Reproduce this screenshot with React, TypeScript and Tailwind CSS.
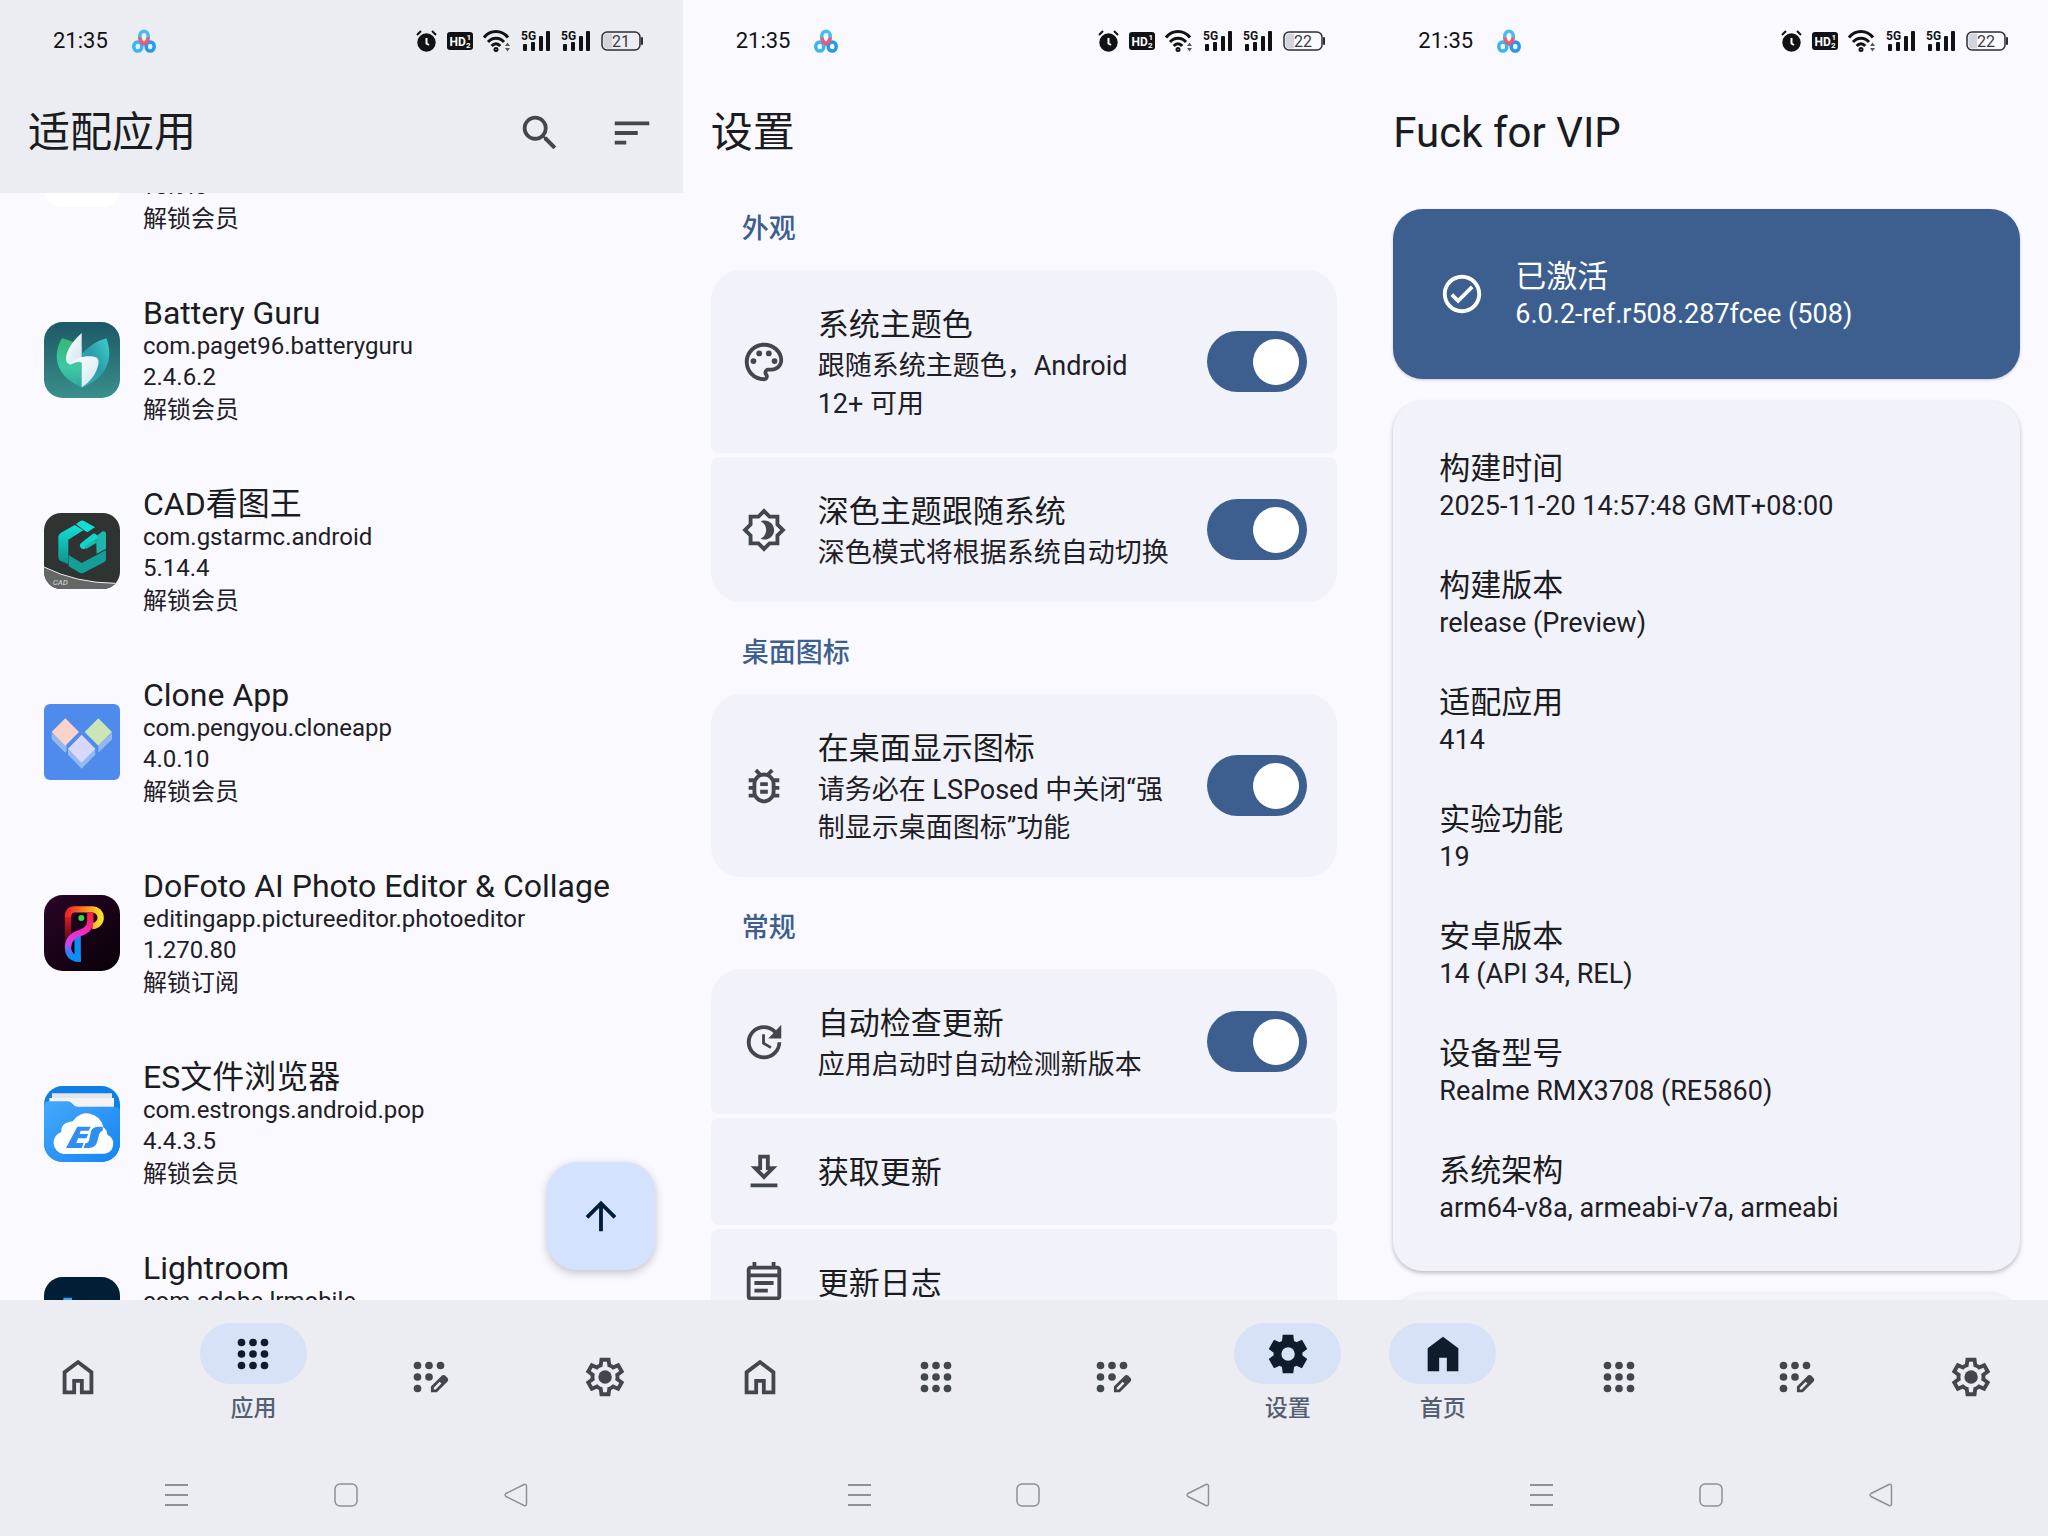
import type { ReactNode } from 'react';
import { useId } from 'react';
import { clsx } from 'clsx';

type Tab = 'home' | 'apps' | 'custom' | 'settings';

function Icon({ children, viewBox = '0 0 24 24', className }: { children: ReactNode; viewBox?: string; className?: string }) {
  return (
    <svg viewBox={viewBox} fill="currentColor" aria-hidden="true" className={clsx('size-[46px] shrink-0', className)}>
      {children}
    </svg>
  );
}

/* ---------- status bar ---------- */

function SignalIcon() {
  return (
    <svg viewBox="0 0 30 22" className="h-[22px] w-[30px]" fill="#111214" aria-hidden="true">
      <text x="0" y="10" fontSize="12" fontWeight="700" fontFamily="Roboto, sans-serif">5G</text>
      <rect x="2" y="14" width="4" height="7" rx="1" />
      <rect x="10" y="12" width="4" height="9" rx="1" />
      <rect x="18" y="6" width="4" height="15" rx="1" />
      <rect x="25" y="1" width="4" height="20" rx="1" />
    </svg>
  );
}

function StatusBar({ battery }: { battery: number }) {
  return (
    <div className="flex h-[72px] shrink-0 items-center justify-between pt-[10px] pr-[40px] pl-[53px] text-[#111214]">
      <div className="flex items-center gap-6">
        <span className="text-[22px] leading-8">21:35</span>
        <svg viewBox="0 0 24 24" className="size-6" fill="none" strokeWidth="3.500" aria-hidden="true">
          <ellipse cx="5.800" cy="17.500" rx="4" ry="4.600" stroke="#35b6f2" />
          <ellipse cx="18.200" cy="17.500" rx="4" ry="4.600" stroke="#1f9bea" />
          <path d="M7.800 10V7a4.200 4.800 0 0 1 8.400 0v3" stroke="#45bdf0" />
          <path d="M7.800 8.500c0 3.500 2 5 4.200 6.500 2.200-1.500 4.200-3 4.200-6.500" stroke="#ee5a75" />
        </svg>
      </div>
      <div className="flex items-center gap-[10px]">
        <svg viewBox="0 0 21 22" className="h-[22px] w-[21px]" fill="#111214" aria-hidden="true">
          <circle cx="10.500" cy="12.500" r="9.200" />
          <path d="M1 5l4-4M20 5l-4-4" stroke="#111214" strokeWidth="2" />
          <path d="M10.500 8v5.500l2.500 1.500" stroke="#fff" strokeWidth="2" fill="none" />
        </svg>
        <svg viewBox="0 0 26 18" className="h-[18px] w-[26px]" aria-hidden="true">
          <rect width="26" height="18" rx="3" fill="#111214" />
          <g fill="#fff" fontFamily="Roboto, sans-serif" fontWeight="700">
            <text x="2.500" y="13.500" fontSize="12">HD</text>
            <text x="19.500" y="8" fontSize="8">1</text>
            <text x="19" y="16" fontSize="8">2</text>
          </g>
        </svg>
        <svg viewBox="0 0 28 22" className="h-[22px] w-[28px]" fill="none" stroke="#111214" strokeWidth="3" aria-hidden="true">
          <path d="M1 7.500C7.500-.500 18.500-.500 25 7.500M5 12c4.500-5 11.500-5 16 0M8.700 16c2.500-3 6-3 8.500 0" />
          <circle cx="13" cy="19.500" r="1" />
          <path d="M22 16l2.500-3.500L27 16zM22 18l2.500 3.500L27 18z" fill="#55585c" stroke="none" />
        </svg>
        <SignalIcon />
        <SignalIcon />
        <svg viewBox="0 0 42 20" className="h-5 w-[42px]" aria-hidden="true">
          <rect x="1" y="1" width="38" height="18" rx="5" fill="none" stroke="#2c2d31" strokeWidth="1.500" />
          <path d="M6 2.500h5v15H6a3.500 3.500 0 0 1-3.500-3.500V6A3.500 3.500 0 0 1 6 2.500z" fill="#d3d4d9" />
          <rect x="40" y="6" width="2" height="8" rx="1" fill="#2c2d31" />
          <text x="20" y="16" textAnchor="middle" fontSize="16" fill="#3a3b3f" fontFamily="Roboto, sans-serif">{battery}</text>
        </svg>
      </div>
    </div>
  );
}

/* ---------- bottom navigation ---------- */

const GEAR =
  'm370-80-16-128q-13-5-24.5-12T307-235l-119 50L78-375l103-78q-1-7-1-13.5v-27q0-6.5 1-13.5L78-585l110-190 119 50q11-8 23-15t24-12l16-128h220l16 128q13 5 24.5 12t22.5 15l119-50 110 190-103 78q1 7 1 13.5v27q0 6.5-2 13.5l103 78-110 190-118-50q-11 8-23 15t-24 12L590-80H370Z';

function DotGrid({ points }: { points: [number, number][] }) {
  return (
    <>
      {points.map(([x, y]) => (
        <circle key={`${x}${y}`} cx={x} cy={y} r="80" />
      ))}
    </>
  );
}

const CUSTOM_DOTS: [number, number][] = [[240, -720], [480, -720], [720, -720], [240, -480], [480, -480], [240, -240]];
const APP_DOTS: [number, number][] = [...CUSTOM_DOTS, [720, -480], [480, -240], [720, -240]];

function NavIcon({ tab, active }: { tab: Tab; active: boolean }) {
  return (
    <Icon viewBox="0 -960 960 960">
      {tab === 'home' && (
        <path
          d={
            active
              ? 'M160-120v-480l320-240 320 240v480H560v-280H400v280H160Z'
              : 'M240-200h120v-240h240v240h120v-360L480-740 240-560v360Zm-80 80v-480l320-240 320 240v480H520v-240h-80v240H160Z'
          }
        />
      )}
      {tab === 'apps' && <DotGrid points={APP_DOTS} />}
      {tab === 'custom' && (
        <>
          <DotGrid points={CUSTOM_DOTS} />
          <path d="M520-160v-123l221-220q9-9 20-13t22-4q12 0 23 4.5t20 13.5l37 37q8 9 12.5 20t4.5 22q0 11-4 22.5T863-380L643-160H520Zm60-60h38l121-122-37-37-122 121v38Z" fillRule="evenodd" />
        </>
      )}
      {tab === 'settings' &&
        (active ? (
          <path fillRule="evenodd" d={`${GEAR}M482-340q58 0 99-41t41-99q0-58-41-99t-99-41q-59 0-99.5 41T342-480q0 58 40.500 99t99.500 41Z`} />
        ) : (
          <>
            <path
              fillRule="evenodd"
              d={`${GEAR}M440-160h79l14-106q31-8 57.500-23.500T639-327l99 41 39-68-86-65q5-14 7-29.500t2-31.500q0-16-2-31.500t-7-29.500l86-65-39-68-99 42q-22-23-48.500-38.500T533-694l-13-106h-79l-14 106q-31 8-57.500 23.500T321-633l-99-41-39 68 86 64q-5 15-7 30t-2 32q0 16 2 31t7 30l-86 65 39 68 99-42q22 23 48.500 38.500T427-266l13 106Z`}
            />
            <circle cx="482" cy="-480" r="140" />
          </>
        ))}
    </Icon>
  );
}

const TABS: { id: Tab; label: string }[] = [
  { id: 'home', label: '首页' },
  { id: 'apps', label: '应用' },
  { id: 'custom', label: '自定义' },
  { id: 'settings', label: '设置' },
];

function BottomBar({ current }: { current: Tab }) {
  return (
    <footer className="shrink-0 bg-[#ecedf2]">
      <nav className="flex h-[154px] items-center justify-between px-6">
        {TABS.map(({ id, label }) => {
          const active = id === current;
          return (
            <button key={id} type="button" aria-label={label} className="flex w-[107px] flex-col items-center text-[#42474e]">
              <span className={clsx('flex h-[61px] w-full items-center justify-center rounded-full', active && 'bg-[#d7e2f6] text-[#0e1c2b]')}>
                <NavIcon tab={id} active={active} />
              </span>
              {active && <span className="mt-[3px] text-[23px] leading-[44px] font-medium text-[#545f71]">{label}</span>}
            </button>
          );
        })}
      </nav>
      <div className="flex h-[82px] items-center justify-between pr-[155px] pl-[165px] text-[#8f9095]">
        <button type="button" aria-label="Recents">
          <svg viewBox="0 0 23 24" className="h-6 w-[23px]" stroke="currentColor" strokeWidth="2"><path d="M0 2h23M0 12h23M0 22h23" /></svg>
        </button>
        <button type="button" aria-label="Home">
          <svg viewBox="0 0 24 24" className="size-6" fill="none" stroke="currentColor" strokeWidth="1.500"><rect x="1" y="1" width="22" height="22" rx="5" /></svg>
        </button>
        <button type="button" aria-label="Back">
          <svg viewBox="0 0 24 24" className="size-6" fill="none" stroke="currentColor" strokeWidth="1.500"><path d="M20 1.500 2 10.500q-2 1.500 0 3L20 22.500q2.500.700 2.500-1.500V3q0-2.200-2.500-1.500z" /></svg>
        </button>
      </div>
    </footer>
  );
}

function Screen({ title, battery, tab, tinted, actions, children }: { title: string; battery: number; tab: Tab; tinted?: boolean; actions?: ReactNode; children: ReactNode }) {
  return (
    <section className="flex min-w-0 flex-col overflow-hidden bg-[#faf9ff]">
      <header className={clsx('shrink-0', tinted && 'bg-[#ecedf2]')}>
        <StatusBar battery={battery} />
        <div className="flex h-[121px] items-center justify-between px-7">
          <h1 className="text-[42px] leading-[60px] text-[#1a1c20]">{title}</h1>
          {actions}
        </div>
      </header>
      <main className="relative min-h-0 flex-1 overflow-hidden">{children}</main>
      <BottomBar current={tab} />
    </section>
  );
}

/* ---------- app list ---------- */

function BatteryGuruLogo() {
  return (
    <svg viewBox="0 0 228 228" aria-hidden="true">
      <defs>
        <linearGradient id="bg-base" x1="0" y1="0" x2="0" y2="1"><stop stopColor="#1c5866" /><stop offset="1" stopColor="#3a8f8b" /></linearGradient>
        <linearGradient id="bg-left" x1="0" y1="0" x2="0" y2="1"><stop stopColor="#35b873" /><stop offset=".6" stopColor="#3cc9a4" /><stop offset="1" stopColor="#2fa79e" /></linearGradient>
        <linearGradient id="bg-right" x1="1" y1="0" x2="0" y2="1"><stop stopColor="#3bd0c6" /><stop offset=".5" stopColor="#2c9bab" /><stop offset="1" stopColor="#35b8b8" /></linearGradient>
        <linearGradient id="bg-white" x1="0" y1="0" x2="1" y2="1"><stop stopColor="#ffffff" /><stop offset="1" stopColor="#cfe6f2" /></linearGradient>
      </defs>
      <rect width="228" height="228" rx="56" fill="url(#bg-base)" />
      <path d="M54 49C30 88 22 156 113 197V75Q80 54 54 49z" fill="url(#bg-left)" />
      <path d="M187 49C202 88 208 160 113 197V96Q146 60 187 49z" fill="url(#bg-right)" />
      <path d="M113 33C88 56 66 84 66 112q0 13 13 16 10-12 34-14z" fill="url(#bg-white)" />
      <path d="M79 128c14-20 38-26 62-25 20 1 25 8 22 24-5 27-23 51-50 69v-74q-14-6-34 6z" fill="url(#bg-white)" />
    </svg>
  );
}

function CadLogo() {
  return (
    <svg viewBox="0 0 228 228" aria-hidden="true">
      <defs>
        <clipPath id="cad-clip"><rect width="228" height="228" rx="52" /></clipPath>
        <linearGradient id="cad-teal" x1="0" y1="0" x2="0" y2="1"><stop stopColor="#0fe3d6" /><stop offset="1" stopColor="#128f8b" /></linearGradient>
      </defs>
      <g clipPath="url(#cad-clip)">
        <rect width="228" height="228" fill="#2f3332" />
        <path d="M0 162Q96 212 228 210V228H0z" fill="#636766" />
        <path d="M0 162Q96 210 214 211" fill="none" stroke="#f2f3f3" strokeWidth="3" />
      </g>
      <path d="M92 36 118 52 73 80V154L50 144Q43 141 43 132V72Q43 64 50 60z" fill="url(#cad-teal)" />
      <path d="M96 33 108 25q6-4 12-1l33 19-22 14q-6-1-9-4z" fill="#10dfd3" />
      <path d="M74 126 113 150 186 111V140Q186 144 180 148L119 179Q113 182 107 179L74 160z" fill="#159d98" />
      <path d="M156 70 176 55q10-2 10 8v44l-28 15z" fill="#1db7b0" />
      <path d="M118 98 150 72" stroke="#11d5ca" strokeWidth="20" strokeLinecap="round" />
      <path d="M124 104 156 84" stroke="#18b9b1" strokeWidth="10" />
      <text x="26" y="216" fontSize="24" fontStyle="italic" fontWeight="500" fill="#c3c6c5" fontFamily="Roboto, sans-serif">CAD</text>
    </svg>
  );
}

function CloneAppLogo() {
  return (
    <svg viewBox="0 0 228 228" aria-hidden="true">
      <rect width="228" height="228" rx="18" fill="#4f8bec" />
      <path d="M23 86v20l41 40 4-4v-18zM204 86v20l-41 40v-20z" fill="#94b8f2" />
      <path d="M64 43 105 84 64 125 23 84z" fill="#fcd3ca" />
      <path d="M163 43 204 84 163 125 122 84z" fill="#cbe6b4" />
      <path d="M72 134v18l41 42 41-42v-18z" fill="#94b8f2" />
      <path d="M113 92 154 134 113 176 72 134z" fill="#dad7fd" />
    </svg>
  );
}

function DoFotoLogo() {
  return (
    <svg viewBox="0 0 228 228" fill="none" strokeWidth="19" aria-hidden="true">
      <defs>
        <linearGradient id="df-base" x1="0" y1="0" x2="1" y2="1"><stop stopColor="#2a0428" /><stop offset="1" stopColor="#080107" /></linearGradient>
        <linearGradient id="df-top" gradientUnits="userSpaceOnUse" x1="70" y1="0" x2="178" y2="0"><stop stopColor="#f5222d" /><stop offset=".5" stopColor="#f98a1f" /><stop offset="1" stopColor="#f6ea27" /></linearGradient>
        <linearGradient id="df-left" gradientUnits="userSpaceOnUse" x1="0" y1="50" x2="0" y2="140"><stop stopColor="#f5222d" /><stop offset="1" stopColor="#4d0715" /></linearGradient>
        <linearGradient id="df-mid" gradientUnits="userSpaceOnUse" x1="139" y1="50" x2="80" y2="160"><stop stopColor="#f5222d" /><stop offset=".55" stopColor="#f22dd0" /><stop offset="1" stopColor="#c14be8" /></linearGradient>
        <linearGradient id="df-low" gradientUnits="userSpaceOnUse" x1="0" y1="140" x2="0" y2="185"><stop stopColor="#c14be8" /><stop offset="1" stopColor="#0b8ff5" /></linearGradient>
      </defs>
      <rect width="228" height="228" rx="56" fill="url(#df-base)" />
      <path d="M72 142V64" stroke="url(#df-left)" />
      <path d="M101 122V200" stroke="#0b8ff5" />
      <path d="M72 66Q72 43 92 43H145a25 25 0 0 1 0 50" stroke="url(#df-top)" />
      <path d="M139 52V78Q139 104 108 114 72 126 72 156" stroke="url(#df-mid)" />
      <path d="M72 152v8q2 31 38 31" stroke="url(#df-low)" />
      <circle cx="112" cy="69" r="9" fill="#2fdf3a" />
    </svg>
  );
}

function EsLogo() {
  return (
    <svg viewBox="0 0 228 228" aria-hidden="true">
      <defs>
        <clipPath id="es-clip"><rect width="228" height="228" rx="56" /></clipPath>
        <linearGradient id="es-front" x1="0" y1="0" x2="1" y2="1"><stop stopColor="#45a9fb" /><stop offset="1" stopColor="#1583f3" /></linearGradient>
      </defs>
      <g clipPath="url(#es-clip)">
        <rect width="228" height="228" fill="#0f7fe6" />
        <path d="M24 22H204V50H24z" fill="#e3e5e8" />
        <path d="M16 36H210V70H16z" fill="#f3f3f4" />
        <path d="M0 60q2-14 14-14H72q9 0 14 8 6 8 14 8H212q16 0 16 14V228H0z" fill="url(#es-front)" />
      </g>
      <path d="M58 204a34 34 0 0 1-6-66q-2-28 34-32a50 50 0 0 1 92 18q12 8 12 22a30 30 0 0 1-8 57z" fill="#fff" />
      <path d="M100 122h40l-6 12H110l-3 10h26l-6 13H102l-5 14h22l-6 15H66z" fill="#2f8ff0" />
      <path d="M176 122h-14q-20 0-22 20l-4 18q-2 12-12 12l-6 14h16q22 0 26-20l5-20q3-10 11-12z" fill="#2f8ff0" />
    </svg>
  );
}

function LightroomLogo() {
  return (
    <svg viewBox="0 0 228 228" aria-hidden="true">
      <rect width="228" height="228" rx="56" fill="#001e36" />
      <path d="M58 62h26v88h40v20H58z" fill="#31a8ff" />
    </svg>
  );
}

const APPS = [
  { name: '', pkg: '', version: 'v8.9.0', tag: '解锁会员', logo: <div className="size-full rounded-[18px] bg-white" /> },
  { name: 'Battery Guru', pkg: 'com.paget96.batteryguru', version: '2.4.6.2', tag: '解锁会员', logo: <BatteryGuruLogo /> },
  { name: 'CAD看图王', pkg: 'com.gstarmc.android', version: '5.14.4', tag: '解锁会员', logo: <CadLogo /> },
  { name: 'Clone App', pkg: 'com.pengyou.cloneapp', version: '4.0.10', tag: '解锁会员', logo: <CloneAppLogo /> },
  { name: 'DoFoto AI Photo Editor & Collage', pkg: 'editingapp.pictureeditor.photoeditor', version: '1.270.80', tag: '解锁订阅', logo: <DoFotoLogo /> },
  { name: 'ES文件浏览器', pkg: 'com.estrongs.android.pop', version: '4.4.3.5', tag: '解锁会员', logo: <EsLogo /> },
  { name: 'Lightroom', pkg: 'com.adobe.lrmobile', version: '', tag: '', logo: <LightroomLogo /> },
];

function AppsScreen() {
  return (
    <Screen
      title="适配应用"
      battery={21}
      tab="apps"
      tinted
      actions={
        <div className="flex gap-[46px] text-[#42474e]">
          <button type="button" aria-label="搜索">
            <Icon><path d="M15.500 14h-.79l-.28-.27A6.471 6.471 0 0 0 16 9.500 6.500 6.500 0 1 0 9.500 16c1.610 0 3.090-.59 4.230-1.570l.27.28v.79l5 4.990L20.490 19l-4.990-5zm-6 0C7.010 14 5 11.990 5 9.500S7.010 5 9.500 5 14 7.010 14 9.500 11.990 14 9.500 14z" /></Icon>
          </button>
          <button type="button" aria-label="排序">
            <Icon><path d="M3 18h6v-2H3v2zM3 6v2h18V6H3zm0 7h12v-2H3v2z" /></Icon>
          </button>
        </div>
      }
    >
      <ul className="-mt-[120px]">
        {APPS.map((app) => (
          <li key={app.pkg} className="flex items-center gap-[23px] py-[31px] pr-7 pl-11">
            <div className="size-[76px] shrink-0">{app.logo}</div>
            <div className="min-w-0 text-2xl/[31px] text-[#1e2025]">
              <h2 className="h-9 text-[32px] leading-9 whitespace-nowrap text-[#1a1c20]">{app.name}</h2>
              <p className="h-[31px]">{app.pkg}</p>
              <p className="h-[31px]">{app.version}</p>
              <p className="h-[31px] leading-[34px]">{app.tag}</p>
            </div>
          </li>
        ))}
      </ul>
      <button
        type="button"
        aria-label="回到顶部"
        className="absolute right-7 bottom-[30px] flex size-[108px] items-center justify-center rounded-[30px] bg-[#d3e3ff] text-[#001c39] shadow-[0_3px_10px_rgba(0,0,0,0.22)]"
      >
        <Icon><path d="m4 12 1.410 1.410L11 7.830V20h2V7.830l5.580 5.590L20 12l-8-8-8 8z" /></Icon>
      </button>
    </Screen>
  );
}

/* ---------- settings ---------- */

const SETTINGS = [
  {
    label: '外观',
    items: [
      {
        title: '系统主题色',
        desc: '跟随系统主题色，Android 12+ 可用',
        icon: (
          <>
            <path d="M12 22C6.490 22 2 17.510 2 12S6.490 2 12 2s10 4.040 10 9c0 3.310-2.690 6-6 6h-1.770c-.28 0-.5.220-.5.500 0 .120.050.230.130.330.410.470.640 1.060.640 1.670A2.500 2.500 0 0 1 12 22zm0-18c-4.410 0-8 3.590-8 8s3.590 8 8 8c.28 0 .5-.22.5-.5a.54.54 0 0 0-.14-.35c-.41-.46-.63-1.050-.63-1.650a2.500 2.500 0 0 1 2.500-2.500H16c2.210 0 4-1.790 4-4 0-3.860-3.590-7-8-7z" />
            <circle cx="6.500" cy="11.500" r="1.500" />
            <circle cx="9.500" cy="7.500" r="1.500" />
            <circle cx="14.500" cy="7.500" r="1.500" />
            <circle cx="17.500" cy="11.500" r="1.500" />
          </>
        ),
        toggle: true,
      },
      {
        title: '深色主题跟随系统',
        desc: '深色模式将根据系统自动切换',
        icon: (
          <path d="M20 8.690V4h-4.690L12 .69 8.690 4H4v4.690L.69 12 4 15.310V20h4.690L12 23.310 15.310 20H20v-4.690L23.310 12 20 8.690zm-2 5.790V18h-3.520L12 20.480 9.520 18H6v-3.520L3.520 12 6 9.520V6h3.520L12 3.520 14.480 6H18v3.520L20.480 12 18 14.480zM12.290 7c-.74 0-1.450.170-2.080.460 1.720.790 2.920 2.530 2.920 4.540s-1.200 3.750-2.920 4.540c.63.290 1.340.460 2.080.460 2.760 0 5-2.240 5-5s-2.240-5-5-5z" />
        ),
        toggle: true,
      },
    ],
  },
  {
    label: '桌面图标',
    items: [
      {
        title: '在桌面显示图标',
        desc: '请务必在 LSPosed 中关闭“强制显示桌面图标”功能',
        icon: (
          <path d="M20 8h-2.810a5.985 5.985 0 0 0-1.820-1.960L17 4.410 15.590 3l-2.170 2.170a6.002 6.002 0 0 0-2.830 0L8.410 3 7 4.410l1.620 1.630C7.880 6.550 7.260 7.220 6.810 8H4v2h2.090c-.05.330-.09.660-.09 1v1H4v2h2v1c0 .340.040.670.090 1H4v2h2.810c1.040 1.790 2.970 3 5.190 3s4.150-1.210 5.190-3H20v-2h-2.090c.05-.33.090-.66.090-1v-1h2v-2h-2v-1c0-.34-.04-.67-.09-1H20V8zm-4 4v3c0 .220-.03.470-.07.700l-.1.650-.37.650c-.72 1.240-2.040 2-3.460 2s-2.740-.77-3.460-2l-.37-.64-.1-.65A4.600 4.600 0 0 1 8 15v-4c0-.23.030-.48.070-.7l.1-.65.370-.65c.3-.52.720-.97 1.210-1.310l.57-.39.740-.18a3.787 3.787 0 0 1 1.890 0l.68.160.61.420c.5.340.910.780 1.210 1.310l.38.650.1.650c.04.220.070.470.070.690v1zm-6 2h4v2h-4zm0-4h4v2h-4z" />
        ),
        toggle: true,
      },
    ],
  },
  {
    label: '常规',
    items: [
      {
        title: '自动检查更新',
        desc: '应用启动时自动检测新版本',
        icon: (
          <path d="M21 10.120h-6.780l2.740-2.820c-2.730-2.700-7.150-2.800-9.880-.1a6.887 6.887 0 0 0 0 9.790 7.020 7.020 0 0 0 9.880 0C18.320 15.650 19 14.080 19 12.100h2c0 1.980-.88 4.550-2.640 6.290-3.510 3.480-9.210 3.480-12.720 0-3.500-3.470-3.530-9.110-.02-12.580a8.987 8.987 0 0 1 12.650 0L21 3v7.120zM12.500 8v4.250l3.500 2.080-.72 1.210L11 13V8h1.500z" />
        ),
        toggle: true,
      },
      {
        title: '获取更新',
        icon: <path d="M19 9h-4V3H9v6H5l7 7 7-7zm-8 2V5h2v6h1.170L12 13.170 9.830 11H11zm-6 7h14v2H5z" />,
      },
      {
        title: '更新日志',
        icon: (
          <path d="M19 3h-1V1h-2v2H8V1H6v2H5c-1.110 0-1.990.900-1.990 2L3 19a2 2 0 0 0 2 2h14c1.100 0 2-.9 2-2V5c0-1.100-.9-2-2-2zm0 16H5V9h14v10zm0-12H5V5h14v2zM7 11h10v2H7v-2zm0 4h7v2H7v-2z" />
        ),
      },
    ],
  },
];

function SettingRow({ title, desc, icon, toggle }: { title: string; desc?: string; icon: ReactNode; toggle?: boolean }) {
  const id = useId();
  return (
    <div className="flex items-center gap-[31px] rounded-lg bg-[#f2f2fa] p-[30px] first:rounded-t-[30px] last:rounded-b-[30px]">
      <Icon className="text-[#42474e]">{icon}</Icon>
      <div className="flex-1 pt-[3px]">
        <label htmlFor={toggle ? id : undefined} className="block text-[31px] leading-[44px] text-[#1a1c20]">{title}</label>
        {desc && <p className="text-[27px] leading-[38px] text-[#1e2025]">{desc}</p>}
      </div>
      {toggle && (
        <input
          id={id}
          type="checkbox"
          role="switch"
          defaultChecked
          className="flex h-[61px] w-[100px] shrink-0 appearance-none items-center rounded-full bg-[#dfe2eb] px-2 before:size-[46px] before:rounded-full before:bg-white before:content-[''] checked:justify-end checked:bg-[#3c5f8f]"
        />
      )}
    </div>
  );
}

function SettingsScreen() {
  return (
    <Screen title="设置" battery={22} tab="settings">
      <div className="flex flex-col gap-[31px] px-7 pt-4">
        {SETTINGS.map((group) => (
          <section key={group.label}>
            <h2 className="mb-5 px-[31px] text-[27px] leading-[41px] font-medium text-[#3d5f90]">{group.label}</h2>
            <div className="flex flex-col gap-1">
              {group.items.map((item) => (
                <SettingRow key={item.title} {...item} />
              ))}
            </div>
          </section>
        ))}
      </div>
    </Screen>
  );
}

/* ---------- home ---------- */

const INFO = [
  ['构建时间', '2025-11-20 14:57:48 GMT+08:00'],
  ['构建版本', 'release (Preview)'],
  ['适配应用', '414'],
  ['实验功能', '19'],
  ['安卓版本', '14 (API 34, REL)'],
  ['设备型号', 'Realme RMX3708 (RE5860)'],
  ['系统架构', 'arm64-v8a, armeabi-v7a, armeabi'],
];

function HomeScreen() {
  return (
    <Screen title="Fuck for VIP" battery={22} tab="home">
      <div className="flex flex-col gap-[22px] px-7 pt-4">
        <div className="flex items-center gap-[30px] rounded-[30px] bg-[#3c5f8f] px-[46px] py-12 text-white shadow-[0_1px_3px_rgba(0,0,0,0.2)]">
          <Icon>
            <path d="M12 2C6.480 2 2 6.480 2 12s4.480 10 10 10 10-4.480 10-10S17.520 2 12 2zm0 18c-4.410 0-8-3.590-8-8s3.590-8 8-8 8 3.590 8 8-3.590 8-8 8zm4.590-12.420L10 14.170l-2.590-2.580L6 13l4 4 8-8z" />
          </Icon>
          <div>
            <h2 className="text-[31px] leading-10">已激活</h2>
            <p className="text-[27px] leading-[34px]">6.0.2-ref.r508.287fcee (508)</p>
          </div>
        </div>
        <dl className="flex flex-col gap-[43px] rounded-[30px] bg-[#f2f2fa] px-[46px] pt-12 pb-[46px] shadow-[0_2px_4px_rgba(0,0,0,0.25)]">
          {INFO.map(([label, value]) => (
            <div key={label}>
              <dt className="text-[31px] leading-10 text-[#1a1c20]">{label}</dt>
              <dd className="text-[27px] leading-[34px] text-[#1e2025]">{value}</dd>
            </div>
          ))}
        </dl>
        <div className="h-40 rounded-[30px] bg-[#f2f2fa] shadow-[0_2px_4px_rgba(0,0,0,0.25)]" />
      </div>
    </Screen>
  );
}

export default function App() {
  return (
    <div className="grid h-screen grid-cols-3 font-['Roboto','Noto_Sans_CJK_SC',sans-serif]">
      <AppsScreen />
      <SettingsScreen />
      <HomeScreen />
    </div>
  );
}
